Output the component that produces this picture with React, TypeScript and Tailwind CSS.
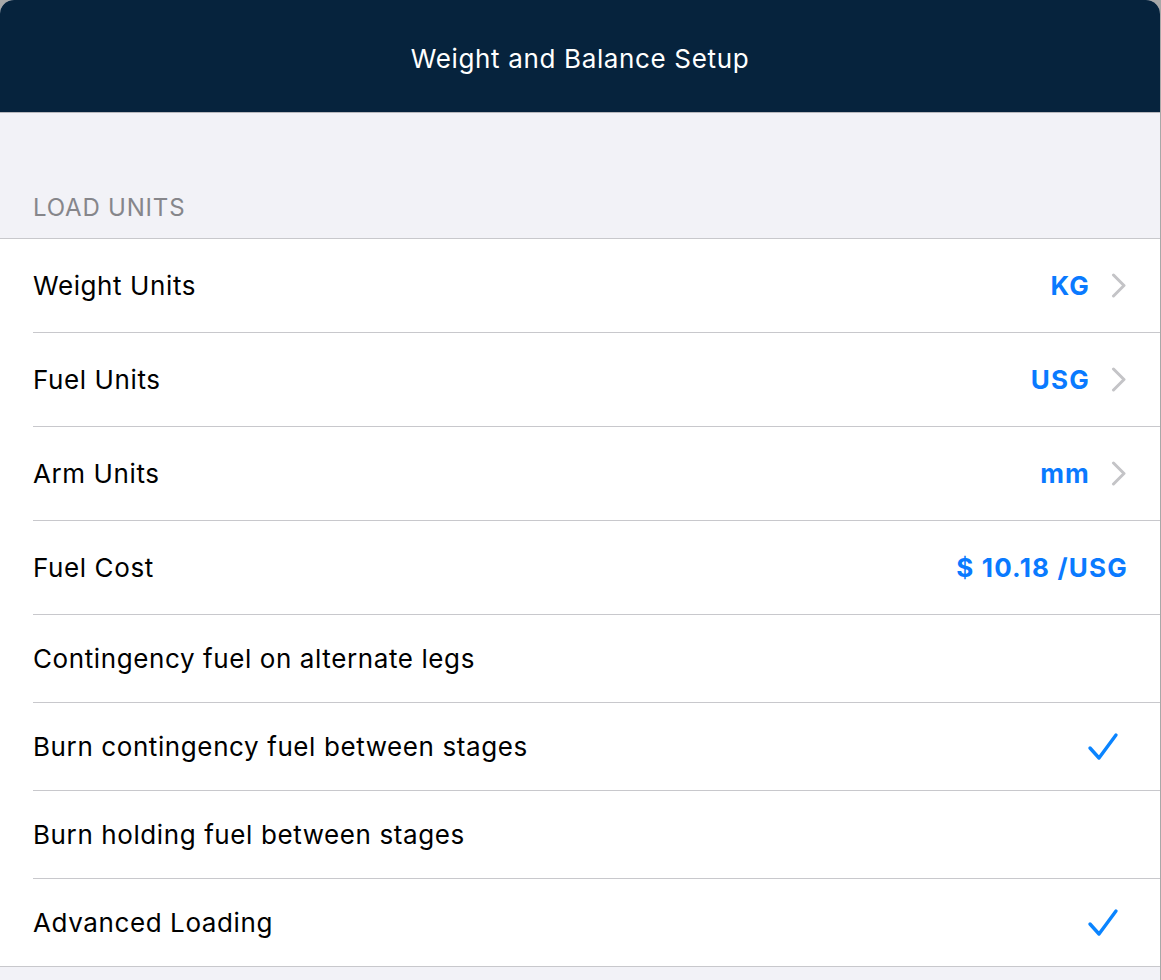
const rows = [
  { label: "Weight Units", value: "KG", chevron: true, h: "h-[94px]" },
  { label: "Fuel Units", value: "USG", chevron: true, h: "h-[94px]" },
  { label: "Arm Units", value: "mm", chevron: true, h: "h-[94px]" },
  { label: "Fuel Cost", value: "$ 10.18 /USG", chevron: false, h: "h-[94px]" },
  { label: "Contingency fuel on alternate legs", h: "h-[88px]" },
  { label: "Burn contingency fuel between stages", check: true, h: "h-[88px]" },
  { label: "Burn holding fuel between stages", h: "h-[88px]" },
  { label: "Advanced Loading", check: true, h: "h-[87px]" },
];

function Chevron() {
  return (
    <svg width="16" height="26" viewBox="0 0 16 26" className="ml-[22px] shrink-0">
      <path d="M2.5 2 L13 12.5 L2.5 23" fill="none" stroke="#c4c4c7" strokeWidth="3" strokeLinecap="round" strokeLinejoin="round" />
    </svg>
  );
}

function Check() {
  return (
    <svg width="32" height="30" viewBox="0 0 32 30" className="mr-[8px] shrink-0">
      <path d="M3 16 L12 26 L29 3" fill="none" stroke="#0a84ff" strokeWidth="3.4" strokeLinecap="round" strokeLinejoin="round" />
    </svg>
  );
}

export default function App() {
  return (
    <div className="min-h-[980px] w-[1161px] bg-[#a8a8a8] font-['Inter','Liberation_Sans',sans-serif]">
      <div className="flex min-h-[980px] w-[1160px] flex-col overflow-hidden rounded-t-[14px] bg-[#f2f2f7]">
        <header className="flex h-[112px] items-center justify-center bg-[#06233d] pt-[4px] text-[26px] tracking-[0.65px] text-white">
          Weight and Balance Setup
        </header>
        <div className="h-[1px] bg-[#b8b8bd]" />
        <div className="flex h-[125px] items-end px-[33px] pb-[12px] text-[24px] uppercase tracking-[0.8px] text-[#86868b]">Load Units</div>
        <div className="border-y border-[#c8c8cc] bg-white">
          {rows.map((r, i) => (
            <div key={r.label} className={`flex items-center pl-[33px] ${r.h}`}>
              <div className={`flex h-full flex-1 items-center pr-[33px] ${i < rows.length - 1 ? "border-b border-[#c8c8cc]" : ""}`}>
                <span className="flex-1 text-[26px] tracking-[0.6px] text-black">{r.label}</span>
                {r.value && <span className="-mr-[1px] text-[26px] font-bold tracking-[1.2px] text-[#0a7aff]">{r.value}</span>}
                {r.chevron && <Chevron />}
                {r.check && <Check />}
              </div>
            </div>
          ))}
        </div>
      </div>
    </div>
  );
}
